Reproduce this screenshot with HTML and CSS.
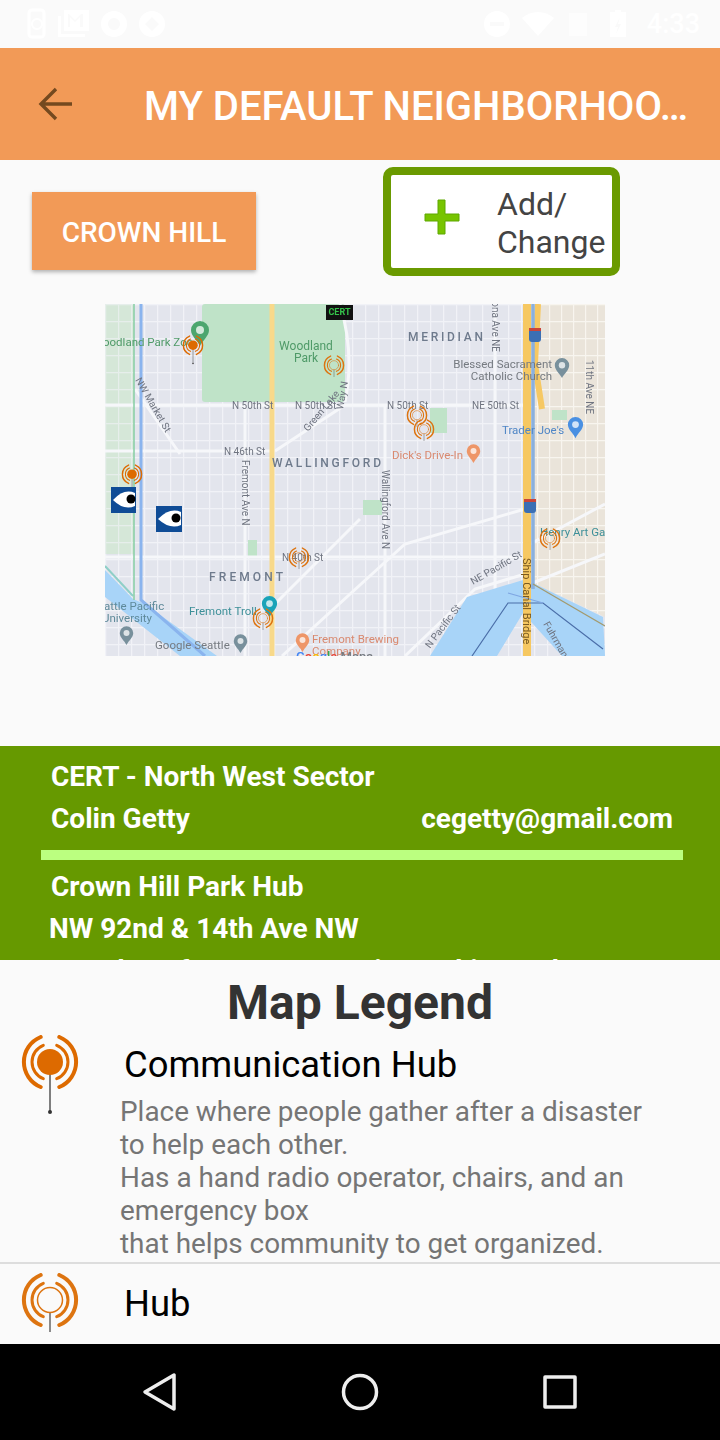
FILE: index.html
```html
<!DOCTYPE html>
<html>

<head>
   <meta charset="utf-8">
   <title>My Default Neighborhood</title>
   <link rel="stylesheet" href="styles.css">
</head>

<body>
   <svg class="defs" width="0" height="0">
      <symbol id="hub-solid" viewBox="0 0 60 80">
         <path d="M30 39V76" stroke="#555" stroke-width="1.5" fill="none" />
         <circle cx="30" cy="77" r="2" fill="#333" />
         <g fill="none" stroke="#dd6a00" stroke-linecap="round">
            <path stroke-width="4" d="M20.7 2A27 27 0 0 0 20.7 52M39.3 2A27 27 0 0 1 39.3 52" />
            <path stroke-width="3" d="M23.3 10.3A18 18 0 0 0 23.3 43.7M36.7 10.3A18 18 0 0 1 36.7 43.7" />
         </g>
         <circle cx="30" cy="27" r="13" fill="#dd6a00" />
      </symbol>
      <symbol id="hub-ring" viewBox="0 0 60 80">
         <path d="M30 39V59" stroke="#666" stroke-width="1.5" fill="none" />
         <g fill="none" stroke="#dd7410" stroke-linecap="round">
            <path stroke-width="4" d="M20.7 2A27 27 0 0 0 20.7 52M39.3 2A27 27 0 0 1 39.3 52" />
            <path stroke-width="3" d="M23.3 10.3A18 18 0 0 0 23.3 43.7M36.7 10.3A18 18 0 0 1 36.7 43.7" />
            <circle cx="30" cy="27" r="12.5" stroke-width="1.5" />
         </g>
      </symbol>
      <symbol id="pin" viewBox="0 0 20 26">
         <path d="M10 0a9 9 0 0 1 9 9c0 6-6 10-9 16C7 19 1 15 1 9a9 9 0 0 1 9-9z" />
         <circle cx="10" cy="9" r="4" fill="#fff" opacity=".75" />
      </symbol>
   </svg>

   <div class="status">
      <div class="status-group">
         <svg width="32" height="32" viewBox="0 0 32 32" fill="none" stroke="#fff" stroke-width="3"><rect x="9" y="2" width="15" height="27" rx="3" /><circle cx="17" cy="16" r="5" stroke-width="2" /></svg>
         <svg class="status-mail" width="34" height="32" viewBox="0 0 34 32" fill="#fff"><path d="M2 8h3v18h24v3H2zM8 2h25v21H8zm4 4v13h2V9l5 5 5-5v10h3V6h-2l-6 6-6-6z" fill-rule="evenodd" /></svg>
         <svg width="28" height="28" viewBox="0 0 28 28" fill="#fff"><path d="M14 1a13 13 0 1 0 0 26 13 13 0 0 0 0-26zm0 7a6 6 0 1 1 0 12 6 6 0 0 1 0-12z" fill-rule="evenodd" /></svg>
         <svg width="28" height="28" viewBox="0 0 28 28" fill="#fff"><path d="M14 1a13 13 0 1 0 0 26 13 13 0 0 0 0-26zm0 6l7 7-7 7-7-7z" fill-rule="evenodd" /></svg>
      </div>
      <div class="status-group">
         <svg width="28" height="28" viewBox="0 0 28 28" fill="#fff"><path d="M14 1a13 13 0 1 0 0 26 13 13 0 0 0 0-26zM7 12h14v4H7z" fill-rule="evenodd" /></svg>
         <svg width="34" height="28" viewBox="0 0 34 28" fill="#fff"><path d="M17 26L1 8c9-8 23-8 32 0z" /></svg>
         <svg width="24" height="28" viewBox="0 0 24 28" fill="#fff" opacity=".6"><path d="M4 3h18v23H4z" /></svg>
         <svg class="status-wide" width="18" height="28" viewBox="0 0 18 28" fill="#fff"><path d="M6 0h6v2h5v25H1V2h5zm5 7l-5 10h3l-2 7 5-10h-3z" fill-rule="evenodd" /></svg>
         <span class="clock status-wide">4:33</span>
      </div>
   </div>

   <header class="appbar">
      <svg class="back" width="36" height="36" viewBox="0 0 36 36" fill="none" stroke="#74491f" stroke-width="3.4"><path d="M34 18H5M18 3L3 18l15 15" /></svg>
      <h1 class="appbar-title">MY DEFAULT NEIGHBORHOO…</h1>
   </header>

   <main class="content">
      <div class="actions">
         <button class="btn-hood">CROWN HILL</button>
         <button class="btn-add">
            <svg class="btn-add-icon" width="36" height="36" viewBox="0 0 36 36"><path d="M14 1h7v14h14v7H21v13h-7V22H1v-7h13z" fill="#77c400" stroke="#5fa800" stroke-width="1" /></svg>
            <span class="btn-add-label">Add/<br>Change</span>
         </button>
      </div>

      <svg class="map" width="500" height="352" viewBox="0 0 500 352">
         <defs>
            <pattern id="grid" width="13" height="17" patternUnits="userSpaceOnUse">
               <path d="M0 .5H13M.5 0V17" stroke="#f1f2f7" stroke-width="1.4" fill="none" />
            </pattern>
            <pattern id="grid-beige" width="12" height="17" patternUnits="userSpaceOnUse">
               <path d="M0 .5H12M.5 0V17" stroke="#f8f5ef" stroke-width="1.4" fill="none" />
            </pattern>
         </defs>

         <rect width="500" height="352" fill="#e3e5ed" />
         <rect width="500" height="352" fill="url(#grid)" />
         <rect width="29" height="250" fill="#d5e7d8" />
         <rect width="29" height="250" fill="url(#grid)" opacity=".6" />
         <path d="M425 0H500V313L428 279 425 240z" fill="#eae4da" />
         <path d="M425 0H500V313L428 279 425 240z" fill="url(#grid-beige)" />

         <rect x="97" width="143" height="98" rx="3" fill="#bfe3c8" />
         <rect x="325" y="104" width="17" height="25" fill="#bfe3c8" />
         <rect x="447" y="106" width="15" height="10" fill="#bfe3c8" />
         <rect x="143" y="236" width="9" height="17" fill="#bfe3c8" />
         <rect x="258" y="196" width="19" height="15" fill="#bfe3c8" />

         <g stroke="#f6f7fa" stroke-width="3" fill="none">
            <path d="M0 101H425M0 147H170M170 147L240 101M0 253H425M140 100V352M280 100V352M390 0V290" />
            <path d="M30 85L75 150M177 352L300 240 420 205M300 352L370 285 420 270M170 300L255 215" />
            <path d="M235 0Q250 50 240 98M425 240L500 200M425 280L500 250" />
         </g>

         <!-- water -->
         <path d="M325 352L362 293 418 276 428 279 498 313 500 352H457L418 309 392 352z" fill="#a8d4f8" />
         <path d="M0 266L28 295 40 300 112 352H75L0 293z" fill="#a8d4f8" />
         <path d="M0 262L28 292" stroke="#8fcfc8" stroke-width="2" fill="none" />

         <!-- highways and routes -->
         <rect x="164.500" width="5" height="352" fill="#f8d98a" />
         <path d="M422 0V352" stroke="#f6c862" stroke-width="8" fill="none" />
         <path d="M433 0L430 60 437 105" stroke="#f6c862" stroke-width="6" fill="none" />
         <path d="M29 0V296" stroke="#8cd0a8" stroke-width="1.6" fill="none" />
         <path d="M36 0V296L100 352" stroke="#8ab4ee" stroke-width="3" fill="none" />
         <path d="M428 0V285" stroke="#8ab0de" stroke-width="3.500" fill="none" />
         <path d="M367 352L403 299H438L498 345" stroke="#4b6ea8" stroke-width="1.2" fill="none" />
         <path d="M403 289L438 299" stroke="#7fa6e2" stroke-width="1.2" fill="none" />
         <path d="M428 280L500 322" stroke="#a39a6e" stroke-width="1.2" fill="none" />

         <!-- place names -->
         <g class="map-label">
            <text x="-2" y="42" class="lb-green">oodland Park Zoo</text>
            <text x="201" y="46" text-anchor="middle" class="lb-green lb-big">Woodland</text>
            <text x="201" y="58" text-anchor="middle" class="lb-green lb-big">Park</text>
            <text x="127" y="105" class="lb-road">N 50th St</text>
            <text x="190" y="105" class="lb-road">N 50th St</text>
            <text x="119" y="151" class="lb-road">N 46th St</text>
            <text x="282" y="105" class="lb-road">N 50th St</text>
            <text x="367" y="105" class="lb-road">NE 50th St</text>
            <text x="167" y="163" class="lb-area" textLength="109">WALLINGFORD</text>
            <text x="303" y="37" class="lb-area" textLength="75">MERIDIAN</text>
            <text x="104" y="277" class="lb-area" textLength="74">FREMONT</text>
            <text x="30" y="76" class="lb-road" transform="rotate(60 30 76)">NW Market St</text>
            <text x="203" y="128" class="lb-road" transform="rotate(-50 203 128)">Green Lake</text>
            <text x="238" y="106" class="lb-road" transform="rotate(-80 238 106)">Way N</text>
            <text x="387" y="48" class="lb-road" text-anchor="end" transform="rotate(90 387 48)">Latona Ave NE</text>
            <text x="481" y="56" class="lb-road" transform="rotate(90 481 56)">11th Ave NE</text>
            <text x="137" y="156" class="lb-road" transform="rotate(90 137 156)">Fremont Ave N</text>
            <text x="277" y="166" class="lb-road" transform="rotate(90 277 166)">Wallingford Ave N</text>
            <text x="368" y="281" class="lb-road" transform="rotate(-30 368 281)">NE Pacific St</text>
            <text x="325" y="345" class="lb-road" transform="rotate(-53 325 345)">N Pacific St</text>
            <text x="418" y="254" class="lb-road lb-brown" transform="rotate(90 418 254)">Ship Canal Bridge</text>
            <text x="438" y="320" class="lb-road" transform="rotate(60 438 320)">Fuhrman</text>
            <text x="177" y="257" class="lb-road">N 40th St</text>
            <text x="447" y="64" text-anchor="end" class="lb-gray">Blessed Sacrament</text>
            <text x="447" y="76" text-anchor="end" class="lb-gray">Catholic Church</text>
            <text x="397" y="130" class="lb-blue">Trader Joe's</text>
            <text x="287" y="155" class="lb-orange">Dick's Drive-In</text>
            <text x="84" y="311" class="lb-teal">Fremont Troll</text>
            <text x="-1" y="306" class="lb-slate">attle Pacific</text>
            <text x="-3" y="318" class="lb-slate">University</text>
            <text x="50" y="345" class="lb-gray">Google Seattle</text>
            <text x="207" y="339" class="lb-orange">Fremont Brewing</text>
            <text x="207" y="351" class="lb-orange">Company</text>
            <text x="435" y="232" class="lb-teal">Henry Art Gallery</text>
            <text x="191" y="357" class="lb-logo"><tspan fill="#4285f4">G</tspan><tspan fill="#ea4335">o</tspan><tspan fill="#fbbc05">o</tspan><tspan fill="#4285f4">g</tspan><tspan fill="#34a853">l</tspan><tspan fill="#ea4335">e</tspan> Maps</text>
         </g>

         <use href="#pin" x="85" y="17" width="20" height="26" fill="#4ca66e" />
         <use href="#pin" x="449" y="54" width="16" height="21" fill="#78909c" />
         <use href="#pin" x="462" y="113" width="17" height="22" fill="#4a90e2" />
         <use href="#pin" x="361" y="140" width="15" height="20" fill="#ee9668" />
         <use href="#pin" x="156" y="292" width="17" height="22" fill="#1aa3b8" />
         <use href="#pin" x="128" y="330" width="15" height="20" fill="#78909c" />
         <use href="#pin" x="14" y="322" width="15" height="20" fill="#78909c" />
         <use href="#pin" x="190" y="329" width="15" height="20" fill="#ee9668" />

         <g class="shield">
            <rect x="424" y="24" width="12" height="14" rx="3" fill="#3b6fb4" />
            <rect x="424" y="24" width="12" height="3" fill="#c9453a" />
            <rect x="419" y="195" width="12" height="14" rx="3" fill="#3b6fb4" />
            <rect x="419" y="195" width="12" height="3" fill="#c9453a" />
         </g>

         <use href="#hub-solid" x="77" y="31" width="22" height="30" />
         <use href="#hub-ring" x="218" y="51" width="22" height="30" />
         <use href="#hub-ring" x="301" y="101" width="22" height="30" />
         <use href="#hub-ring" x="308" y="115" width="22" height="30" />
         <use href="#hub-solid" x="16" y="160" width="22" height="30" />
         <use href="#hub-ring" x="183" y="243" width="22" height="30" />
         <use href="#hub-ring" x="147" y="304" width="22" height="30" />
         <use href="#hub-ring" x="434" y="224" width="22" height="30" />

         <g class="eye">
            <rect x="6" y="183" width="25" height="26" fill="#0f4c96" />
            <path d="M8 196Q19 184 30 189V202Q19 207 8 196z" fill="#fff" />
            <circle cx="26" cy="195" r="4.500" fill="#000" />
            <rect x="51" y="202" width="26" height="26" fill="#0f4c96" />
            <path d="M53 215Q65 203 76 208V221Q65 226 53 215z" fill="#fff" />
            <circle cx="71" cy="214" r="4.500" fill="#000" />
         </g>

         <rect x="221" y="1" width="27" height="15" fill="#111" />
         <text x="234.500" y="11" text-anchor="middle" class="lb-cert">CERT</text>
      </svg>
   </main>

   <section class="hub-panel">
      <div class="hub-line">CERT - North West Sector</div>
      <div class="hub-line hub-contact">
         <span>Colin Getty</span>
         <span>cegetty@gmail.com</span>
      </div>
      <div class="hub-rule"></div>
      <div class="hub-line">Crown Hill Park Hub</div>
      <div class="hub-line hub-line-tight">NW 92nd &amp; 14th Ave NW</div>
      <div class="hub-line">Seattle Safeway Community Parking Hub Lot</div>
   </section>

   <section class="legend">
      <h2 class="legend-title">Map Legend</h2>
      <div class="legend-item">
         <svg class="legend-icon" width="60" height="80"><use href="#hub-solid" /></svg>
         <div class="legend-text">
            <div class="legend-name">Communication Hub</div>
            <p class="legend-desc">Place where people gather after a disaster<br>to help each other.<br>Has a hand radio operator, chairs, and an<br>emergency box<br>that helps community to get organized.</p>
         </div>
      </div>
      <div class="legend-row">
         <svg class="legend-icon" width="60" height="80"><use href="#hub-ring" /></svg>
         <div class="legend-row-name">Hub</div>
      </div>
   </section>

   <nav class="navbar">
      <svg width="36" height="40" viewBox="0 0 36 40" fill="none" stroke="#eee" stroke-width="3.5" stroke-linejoin="round"><path d="M33 3V37L4 20z" /></svg>
      <svg width="38" height="38" viewBox="0 0 38 38" fill="none" stroke="#eee" stroke-width="3.5"><circle cx="19" cy="19" r="16.500" /></svg>
      <svg width="34" height="34" viewBox="0 0 34 34" fill="none" stroke="#eee" stroke-width="3.5" stroke-linejoin="round"><rect x="2" y="2" width="30" height="30" /></svg>
   </nav>
</body>

</html>
```

FILE: styles.css
```css
* {
   box-sizing: border-box;
}

body {
   margin: 0;
   width: 720px;
   height: 1440px;
   overflow: hidden;
   background: #fafafa;
   font-family: Roboto, sans-serif;
}

.defs {
   display: block;
   height: 0;
}

.status {
   height: 48px;
   display: flex;
   justify-content: space-between;
   align-items: center;
   padding: 0 20px;
}

.status-group {
   display: flex;
   align-items: center;
   gap: 10px;
}

.status-mail {
   margin-left: -6px;
}

.status-wide {
   margin-left: 10px;
}

.clock {
   color: #fff;
   font-size: 27px;
   font-weight: 500;
}

.appbar {
   height: 112px;
   background: #f29a57;
   display: flex;
   align-items: center;
   padding-left: 38px;
}

.back {
   flex: none;
}

.appbar-title {
   margin: 5px 0 0 70px;
   color: #fff;
   font-size: 40px;
   font-weight: 500;
   white-space: nowrap;
}

.content {
   height: 586px;
}

.actions {
   display: flex;
   align-items: flex-start;
   padding: 7px 0 0 32px;
}

.btn-hood {
   margin-top: 25px;
   width: 224px;
   height: 78px;
   padding: 2px 0 0;
   border: 0;
   background: #f29a57;
   color: #fff;
   font: 500 28px Roboto, sans-serif;
   box-shadow: 0 2px 4px rgba(0, 0, 0, .3);
}

.btn-add {
   margin-left: 127px;
   width: 237px;
   height: 109px;
   padding: 0 0 0 33px;
   border: 8px solid #6a9a00;
   border-radius: 10px;
   background: #fff;
   display: flex;
   align-items: center;
   gap: 37px;
   color: #444;
   font: 400 32px/38px Roboto, sans-serif;
   text-align: left;
}

.btn-add-icon {
   margin-bottom: 10px;
}

.btn-add-label {
   padding-top: 2px;
}

.map {
   display: block;
   margin: 28px 0 0 105px;
   filter: blur(.5px);
}

.map text {
   font-family: Roboto, sans-serif;
}

.lb-road {
   font-size: 10px;
   fill: #6f7480;
}

.lb-green {
   font-size: 11.500px;
   fill: #4f9a68;
}

.lb-big {
   font-size: 12px;
}

.lb-area {
   font-size: 12px;
   font-weight: 500;
   fill: #6e7a8c;
}

.lb-gray {
   font-size: 11.500px;
   fill: #757a80;
}

.lb-blue {
   font-size: 11.500px;
   fill: #4f86c6;
}

.lb-orange {
   font-size: 11.500px;
   fill: #d9896f;
}

.lb-teal {
   font-size: 11.500px;
   fill: #3d8f98;
}

.lb-slate {
   font-size: 11.500px;
   fill: #5f8a9a;
}

.lb-logo {
   font-size: 13px;
   font-weight: 500;
   fill: #757a80;
}

.lb-brown {
   font-size: 11px;
   fill: #7a5a20;
}

.lb-cert {
   font-size: 9px;
   font-weight: 700;
   fill: #35c24a;
}

.hub-panel {
   height: 214px;
   padding: 10px 37px 0 51px;
   overflow: hidden;
   background: #669900;
   color: #fff;
   font-size: 28px;
   font-weight: 700;
}

.hub-line {
   height: 42px;
   line-height: 42px;
   white-space: nowrap;
}

.hub-line-tight {
   margin-left: -2px;
}

.hub-contact {
   display: flex;
   justify-content: space-between;
   padding-right: 10px;
}

.hub-rule {
   height: 10px;
   margin: 10px 0 6px -10px;
   background: #bbff80;
}

.legend {
   height: 384px;
   overflow: hidden;
}

.legend-title {
   margin: 0;
   height: 72px;
   line-height: 86px;
   text-align: center;
   color: #333;
   font-size: 48px;
   font-weight: 700;
}

.legend-item {
   height: 230px;
   display: flex;
   padding: 3px 0 0 20px;
}

.legend-icon {
   flex: none;
   display: block;
}

.legend-text {
   padding-left: 40px;
   margin-top: 8px;
}

.legend-name {
   margin-left: 4px;
   font-size: 36.400px;
   line-height: 44px;
   color: #000;
}

.legend-desc {
   margin: 8px 0 0;
   color: #757575;
   font-size: 27.900px;
   line-height: 33px;
}

.legend-row {
   height: 82px;
   border-top: 2px solid #ddd;
   display: flex;
   padding: 9px 0 0 20px;
}

.legend-row-name {
   margin: 9px 0 0 44px;
   font-size: 36.400px;
   line-height: 44px;
   color: #000;
}

.navbar {
   height: 96px;
   background: #000;
   display: flex;
   justify-content: space-between;
   align-items: center;
   padding: 0 143px 0 141px;
}
```
